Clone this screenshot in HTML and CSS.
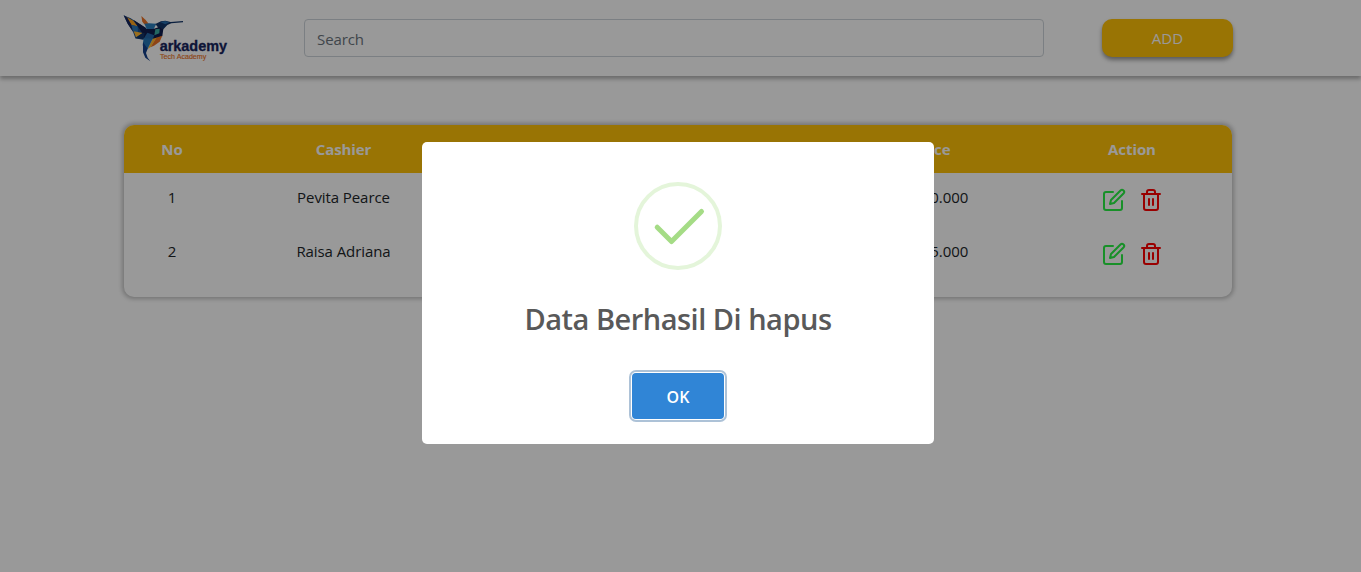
FILE: index.html
```html
<!DOCTYPE html>
<html lang="id">
<head>
<meta charset="utf-8">
<title>Arkademy</title>
<link rel="stylesheet" href="styles.css">
</head>
<body>
<header class="navbar">
  <svg class="logo" viewBox="39 27 324 144" role="img" aria-label="Arkademy Tech Academy">
    <path fill="#1b4f8c" d="M41 31 62 40 84 54 112 72 112 100 98 104 76 100 69 80 52 55Z"/>
    <path fill="#ffa31f" d="M48 35 70 47 83 64 64 60Z"/>
    <path fill="#16245c" d="M41 31 52 38 66 62 69 80 54 58Z"/>
    <path fill="#2b78bb" d="M64 60 83 64 84 84 69 78Z"/>
    <path fill="#101d4d" d="M70 44 107 68 112 84 97 85Z"/>
    <path fill="#ffb833" d="M71 79 98 84 78 97Z"/>
    <path fill="#123468" d="M98 84 112 84 104 103 76 100Z"/>
    <path fill="#ec7225" d="M94 33 107 45 116 56 103 58 97 50Z"/>
    <path fill="#2b7dbb" d="M103 56 117 55 139 56 130 75 112 76Z"/>
    <path fill="#123468" d="M136 57 153 49 166 47 182 51 219 48 219 52 184 55 172 60 160 73 145 68Z"/>
    <path fill="#266bab" d="M150 51 166 48 178 52 166 58Z"/>
    <path fill="#101d4d" d="M106 72 130 72 147 66 160 72 157 93 140 101 124 103 101 103Z"/>
    <path fill="#3caea4" d="M136 73 149 71 148 85 133 91Z"/>
    <path fill="#2368a8" d="M101 101 112 83 133 91 128 103Z"/>
    <path fill="#ec7225" d="M138 98 157 92 149 110 132 122 121 127Z"/>
    <path fill="#ffb833" d="M128 101 140 98 122 126 113 132Z"/>
    <path fill="#2675b4" d="M101 99 128 101 113 131 103 139 98 120Z"/>
    <path fill="#14408a" d="M99 112 113 131 108 144 113 158 121 169 106 158 99 142Z"/>
    <text class="logo-name" x="149" y="138" textLength="202" lengthAdjust="spacingAndGlyphs">arkademy</text>
    <text class="logo-tag" x="150" y="163" textLength="139" lengthAdjust="spacingAndGlyphs">Tech Academy</text>
  </svg>
  <input class="search" type="text" placeholder="Search" aria-label="Search">
  <button class="add">ADD</button>
</header>

<main class="card">
  <div class="row head">
    <span>No</span><span>Cashier</span><span class="price">Price</span><span>Action</span>
  </div>
  <div class="row">
    <span>1</span><span>Pevita Pearce</span><span class="price">Rp. 10.000</span>
    <span class="actions">
      <svg class="icon edit" viewBox="0 0 24 24"><path d="M11 4H4a2 2 0 0 0-2 2v14a2 2 0 0 0 2 2h14a2 2 0 0 0 2-2v-7"/><path d="M18.5 2.5a2.121 2.121 0 0 1 3 3L12 15l-4 1 1-4 9.5-9.5z"/></svg>
      <svg class="icon trash" viewBox="0 0 24 24"><path d="M3 6h18M19 6v14a2 2 0 0 1-2 2H7a2 2 0 0 1-2-2V6m3 0V4a2 2 0 0 1 2-2h4a2 2 0 0 1 2 2v2M10 11v6M14 11v6"/></svg>
    </span>
  </div>
  <div class="row">
    <span>2</span><span>Raisa Adriana</span><span class="price">Rp. 15.000</span>
    <span class="actions">
      <svg class="icon edit" viewBox="0 0 24 24"><path d="M11 4H4a2 2 0 0 0-2 2v14a2 2 0 0 0 2 2h14a2 2 0 0 0 2-2v-7"/><path d="M18.5 2.5a2.121 2.121 0 0 1 3 3L12 15l-4 1 1-4 9.5-9.5z"/></svg>
      <svg class="icon trash" viewBox="0 0 24 24"><path d="M3 6h18M19 6v14a2 2 0 0 1-2 2H7a2 2 0 0 1-2-2V6m3 0V4a2 2 0 0 1 2-2h4a2 2 0 0 1 2 2v2M10 11v6M14 11v6"/></svg>
    </span>
  </div>
</main>

<div class="backdrop">
  <div class="dialog" role="dialog" aria-modal="true">
    <svg class="success" viewBox="0 0 88 88">
      <circle cx="44" cy="44" r="42"/>
      <path d="M23.2 45.2 37.5 59.5 67.5 29.5"/>
    </svg>
    <h2 class="title">Data Berhasil Di hapus</h2>
    <button class="ok">OK</button>
  </div>
</div>
</body>
</html>
```
FILE: styles.css
```css
* { box-sizing: border-box; }

body {
  margin: 0;
  height: 572px;
  overflow: hidden;
  background: #fff;
  color: #212529;
  font: 15px/24px "Open Sans", "Noto Sans", sans-serif;
}

button, input { font: inherit; }

.navbar {
  display: flex;
  align-items: flex-start;
  height: 76px;
  padding: 19px 128px 0 123px;
  box-shadow: 0 3px 4px rgba(0, 0, 0, .3);
}

.logo {
  width: 108px;
  height: 48px;
  margin-top: -5px;
  overflow: visible;
}

.logo-name {
  fill: #16245c;
  stroke: #16245c;
  stroke-width: 1;
  font: bold 43px "Liberation Sans", sans-serif;
}

.logo-tag {
  fill: #ec7225;
  stroke: #ec7225;
  stroke-width: .4;
  font: 20px "Liberation Sans", sans-serif;
}

.search {
  width: 740px;
  height: 38px;
  margin-left: 73px;
  padding: 2px 12px 0;
  border: 1px solid #ced4da;
  border-radius: 4px;
  background: #fff;
  letter-spacing: -.1px;
}

.search::placeholder {
  color: #6c757d;
  opacity: 1;
}

.add {
  width: 131px;
  height: 38px;
  margin-left: 58px;
  padding: 0 0 1px;
  border: 0;
  border-radius: 10px;
  background: #ffc107;
  color: #fff;
  box-shadow: 0 3px 4px rgba(0, 0, 0, .4);
}

.card {
  width: 1108px;
  height: 172px;
  margin: 49px 0 0 124px;
  border-radius: 10px;
  overflow: hidden;
  box-shadow: 0 0 4px 2px rgba(0, 0, 0, .24);
}

.row {
  display: grid;
  grid-template-columns: 96px 247px 365px 200px 200px;
  height: 54px;
  padding-top: 12px;
  text-align: center;
  letter-spacing: -.08px;
}

.head {
  height: 48px;
  background: #ffc107;
  color: #fff;
  font-weight: 700;
}

.price { grid-column: 4; }

.actions {
  display: flex;
  justify-content: center;
  gap: 13px;
  padding: 3px 0 0 1px;
}

.icon {
  width: 24px;
  height: 24px;
  fill: none;
  stroke-width: 2;
  stroke-linecap: round;
  stroke-linejoin: round;
}

.edit { stroke: #28f044; }
.trash { stroke: #f00; }

.backdrop {
  position: fixed;
  inset: 0;
  padding: 142px 427px 0 422px;
  background: rgba(0, 0, 0, .4);
}

.dialog {
  display: flex;
  flex-direction: column;
  align-items: center;
  width: 512px;
  height: 302px;
  padding-top: 40px;
  border-radius: 5px;
  background: #fff;
}

.success {
  width: 88px;
  height: 88px;
  fill: none;
}

.success circle {
  stroke: #e4f5da;
  stroke-width: 4;
}

.success path {
  stroke: #a5dc86;
  stroke-width: 5;
  stroke-linecap: round;
  stroke-linejoin: round;
}

.title {
  margin: 31px 0 0;
  color: #595959;
  font-size: 29px;
  font-weight: 600;
  line-height: 36px;
  letter-spacing: -.5px;
  white-space: nowrap;
}

.ok {
  width: 92px;
  height: 46px;
  margin-top: 36px;
  padding: 2px 0 0;
  border: 0;
  border-radius: 4px;
  background: #3085d6;
  color: #fff;
  font-size: 16px;
  font-weight: 600;
  box-shadow: 0 0 0 1px #fff, 0 0 0 3px #adc2d7;
}
```
